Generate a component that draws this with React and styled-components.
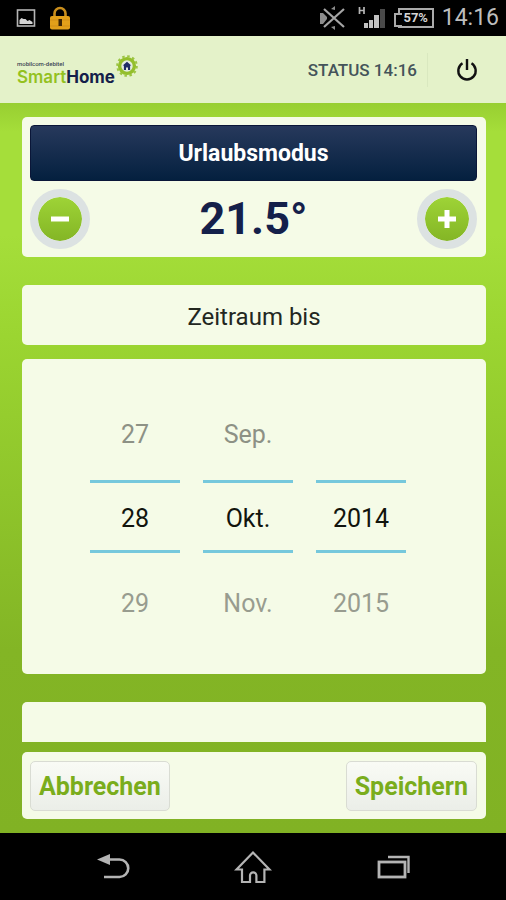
import React, { useState } from 'react';
import styled, { createGlobalStyle, css } from 'styled-components';

const GlobalStyle = createGlobalStyle`
  * {
    box-sizing: border-box;
  }

  body {
    margin: 0;
    background: #000;
    font-family: Roboto, 'Liberation Sans', sans-serif;
  }

  button,
  input {
    font-family: inherit;
    margin: 0;
  }
`;

const Screen = styled.div`
  display: flex;
  flex-direction: column;
  height: 100vh;
`;

const StatusBar = styled.div`
  display: flex;
  align-items: center;
  justify-content: space-between;
  flex: none;
  height: 36px;
  padding: 0 7px 0 16px;
  background: #000;
  color: #bdbdbd;
`;

const StatusGroup = styled.div`
  display: flex;
  align-items: center;
  gap: ${props => props.$gap}px;
`;

const Clock = styled.span`
  font-size: 23px;
  line-height: 36px;
`;

const Battery = styled.div`
  position: relative;
  width: 36px;
  height: 20px;
  margin-left: 4px;
  border: 2px solid #aaa;
  color: #d5d5d5;
  font-size: 13px;
  font-weight: 700;
  line-height: 16px;
  text-align: center;

  &::before {
    content: '';
    position: absolute;
    top: 3px;
    left: -6px;
    width: 6px;
    height: 10px;
    border: 2px solid #aaa;
    border-right: 0;
    background: #000;
  }
`;

const Header = styled.header`
  display: flex;
  align-items: center;
  justify-content: space-between;
  flex: none;
  height: 67px;
  padding: 0 28px 0 17px;
  background: #e4f2c9;
`;

const Brand = styled.a`
  display: flex;
  align-items: flex-start;
  color: #14204a;
  text-decoration: none;
`;

const BrandText = styled.span`
  display: flex;
  flex-direction: column;
  padding-top: 6px;
`;

const BrandOwner = styled.span`
  color: #3c4654;
  font-size: 6px;
  font-weight: 500;
  line-height: 8px;
`;

const BrandName = styled.span`
  font-family: Inter, sans-serif;
  font-size: 17px;
  font-weight: 700;
  line-height: 18px;

  em {
    color: #94c11f;
    font-style: normal;
    font-weight: 600;
  }
`;

const HeaderActions = styled.div`
  display: flex;
  align-items: center;
`;

const StatusText = styled.span`
  padding-right: 10px;
  border-right: 1px solid #d9e8bf;
  color: #44545a;
  font-size: 17px;
  font-weight: 500;
  line-height: 34px;
`;

const IconButton = styled.button`
  display: flex;
  padding: 0;
  border: 0;
  background: none;
  cursor: pointer;
`;

const PowerButton = styled(IconButton)`
  margin-left: 28px;
`;

const Main = styled.main`
  display: flex;
  flex: 1;
  flex-direction: column;
  min-height: 0;
  padding: 0 20px 14px 22px;
  background: linear-gradient(#98cf31 0, #a5de3a 4%, #a5de3a 18%, #9bd531 32%, #83b525 75%, #81b224 100%);
`;

const Content = styled.div`
  display: flex;
  flex: 1;
  flex-direction: column;
  gap: 28px;
  min-height: 0;
  margin-bottom: 10px;
  padding-top: 14px;
  overflow-y: auto;
  scrollbar-width: none;
`;

const Period = styled.section`
  display: flex;
  flex-direction: column;
  gap: 14px;
`;

const Card = styled.div`
  flex: none;
  border-radius: 5px;
  background: #f5fbe7;
`;

const ModeCard = styled(Card)`
  padding: 8px 9px 8px 8px;
`;

const ModeTitle = styled.h1`
  margin: 0;
  padding-top: 2px;
  border: 1px solid #0a1638;
  border-radius: 4px;
  background: linear-gradient(#27395c, #04203f);
  color: #fff;
  font-size: 23px;
  font-weight: 700;
  line-height: 52px;
  text-align: center;
`;

const Temperature = styled.div`
  display: flex;
  align-items: center;
  justify-content: space-between;
  padding-top: 8px;
`;

const Degrees = styled.output`
  color: #14204a;
  font-size: 45px;
  font-weight: 700;
  line-height: 60px;
`;

const RoundButton = styled(IconButton)`
  align-items: center;
  justify-content: center;
  width: 60px;
  height: 60px;
  border: 8px solid #dce2e2;
  border-radius: 50%;
  background: linear-gradient(#a3d93a, #7fb022) border-box;
  background-clip: padding-box;
`;

const PeriodTitle = styled(Card).attrs({ as: 'h2' })`
  margin: 0;
  padding-top: 4px;
  color: #23271f;
  font-size: 24px;
  font-weight: 400;
  line-height: 56px;
  text-align: center;
`;

const DateCard = styled(Card)`
  display: flex;
  justify-content: center;
  gap: 23px;
  padding: 25px 12px 25px 0;
`;

const Wheel = styled.div`
  display: flex;
  flex-direction: column;
  width: 90px;
`;

const wheelText = css`
  width: 100%;
  padding: 4px 0 0;
  background: none;
  font-size: 25px;
  text-align: center;
`;

const WheelStep = styled.button`
  ${wheelText}
  height: 96px;
  border: 0;
  color: ${props => (props.$above ? '#8d9185' : '#989c8f')};
  cursor: pointer;
`;

const WheelValue = styled.input`
  ${wheelText}
  height: 73px;
  border: solid #76c8dc;
  border-width: 3px 0;
  border-radius: 0;
  color: #11140d;
  outline: none;
`;

const EmptyCard = styled(Card)`
  height: 60px;
`;

const ActionCard = styled(Card)`
  display: flex;
  justify-content: space-between;
  padding: 9px 9px 8px 8px;
`;

const ActionButton = styled.button`
  height: 50px;
  padding: 0 8px;
  border: 1px solid #d9dcd3;
  border-radius: 5px;
  background: linear-gradient(#f9fbf5, #ebeee8);
  color: #7aad1c;
  font-size: 25px;
  font-weight: 700;
  cursor: pointer;
`;

const NavBar = styled.nav`
  display: flex;
  align-items: center;
  justify-content: center;
  gap: 104px;
  flex: none;
  height: 67px;
  background: #000;
`;

const PictureIcon = () => (
  <svg width="20" height="19" viewBox="0 0 20 19">
    <rect x="1.5" y="1" width="17" height="16" fill="none" stroke="#b5b5b5" strokeWidth="1.6" />
    <path d="M3.500 15v-4l2-2 2 1 2 0 2 2 2-1 3 2v2z" fill="#d5d5d5" />
  </svg>
);

const LockIcon = () => (
  <svg width="22" height="26" viewBox="0 0 22 26">
    <path d="M5.500 11V8.500a5.500 5.500 0 0 1 11 0V11" fill="none" stroke="#c98e1c" strokeWidth="2.600" />
    <rect x="1" y="11" width="20" height="13.500" rx="2" fill="#e2a01a" />
    <path d="M1 15h20M1 21h20" stroke="#d18e17" strokeWidth="1" />
    <rect x="9.500" y="14" width="3.500" height="7" fill="#3a2406" />
  </svg>
);

const MuteIcon = () => (
  <svg width="31" height="26" viewBox="0 0 31 26">
    <path d="M1 8h3l4 4v2l-4 5H1zM12 4l4-3v4zM12 22l4 3v-4z" fill="#8c8c8c" />
    <path d="M5 4l20 18M25 4L5 22" stroke="#a5a5a5" strokeWidth="2.200" />
  </svg>
);

const SignalIcon = () => (
  <svg width="28" height="26" viewBox="0 0 28 26">
    <path d="M1.500 2v7M6 2v7M1.500 5.500H6" stroke="#b5b5b5" strokeWidth="1.700" fill="none" />
    <path d="M6 18h4v5H6zM11 15h4v8h-4zM16 10h5v13h-5z" fill="#c2c2c2" />
    <path d="M22 4h5v19h-5z" fill="#4a4a4a" />
  </svg>
);

const GearIcon = () => (
  <svg width="24" height="24" viewBox="0 0 24 24">
    <circle cx="12" cy="12" r="9.800" fill="none" stroke="#9cc544" strokeWidth="2" strokeDasharray="2.560 2.560" />
    <circle cx="12" cy="12" r="7.400" fill="#e3ecdf" stroke="#94bf2c" strokeWidth="3.400" />
    <path d="M12 7.800l-4.300 3.700h1.200V16h2.100v-2.500h2V16h2.100v-4.500h1.200z" fill="#1f2c66" />
  </svg>
);

const PowerIcon = () => (
  <svg width="22" height="24" viewBox="0 0 22 24" fill="none" stroke="#111" strokeWidth="2.400">
    <path d="M6.500 5.300a8.700 8.700 0 1 0 9 0M11 1v11" />
  </svg>
);

const BackIcon = () => (
  <svg width="34" height="26" viewBox="0 0 34 26">
    <path d="M13 5.500h10.500a8.700 8.700 0 0 1 0 17.500H8" fill="none" stroke="#b4b4b4" strokeWidth="2.600" />
    <path d="M1 5.500L14 0v11z" fill="#b4b4b4" />
  </svg>
);

const HomeIcon = () => (
  <svg width="38" height="34" viewBox="0 0 38 34">
    <path
      d="M19 2.500L2.500 19.500h5.500V32h8v-6.500a3.200 3.200 0 0 1 6.400 0V32h8V19.500h5.100z"
      fill="none"
      stroke="#b4b4b4"
      strokeWidth="2.200"
    />
  </svg>
);

const RecentIcon = () => (
  <svg width="34" height="24" viewBox="0 0 34 24" fill="none" stroke="#b4b4b4">
    <rect x="3" y="7" width="26" height="15" strokeWidth="2.800" />
    <path d="M12 2h20.500v16" strokeWidth="2.400" />
  </svg>
);

const months = ['Jan.', 'Feb.', 'März', 'Apr.', 'Mai', 'Juni', 'Juli', 'Aug.', 'Sep.', 'Okt.', 'Nov.', 'Dez.'];

const DateWheel = ({ label, value, previous, next, onStep }) => (
  <Wheel>
    <WheelStep type="button" $above disabled={!previous} onClick={() => onStep(-1)}>
      {previous}
    </WheelStep>
    <WheelValue aria-label={label} value={value} readOnly />
    <WheelStep type="button" onClick={() => onStep(1)}>
      {next}
    </WheelStep>
  </Wheel>
);

const App = () => {
  const [temperature, setTemperature] = useState(21.5);
  const [day, setDay] = useState(28);
  const [month, setMonth] = useState(9);
  const [year, setYear] = useState(2014);

  const wrapDay = value => ((value + 30) % 31) + 1;
  const wrapMonth = value => (value + 12) % 12;

  return (
    <Screen>
      <GlobalStyle />
      <StatusBar>
        <StatusGroup $gap={13}>
          <PictureIcon />
          <LockIcon />
        </StatusGroup>
        <StatusGroup $gap={8}>
          <MuteIcon />
          <SignalIcon />
          <Battery>57%</Battery>
          <Clock>14:16</Clock>
        </StatusGroup>
      </StatusBar>

      <Header>
        <Brand href="#">
          <BrandText>
            <BrandOwner>mobilcom-debitel</BrandOwner>
            <BrandName>
              <em>Smart</em>Home
            </BrandName>
          </BrandText>
          <GearIcon />
        </Brand>
        <HeaderActions>
          <StatusText>STATUS 14:16</StatusText>
          <PowerButton type="button" aria-label="Abmelden">
            <PowerIcon />
          </PowerButton>
        </HeaderActions>
      </Header>

      <Main>
        <Content>
          <ModeCard>
            <ModeTitle>Urlaubsmodus</ModeTitle>
            <Temperature>
              <RoundButton type="button" aria-label="Kälter" onClick={() => setTemperature(temperature - 0.5)}>
                <svg width="20" height="20" viewBox="0 0 20 20">
                  <path d="M1 10h18" stroke="#fff" strokeWidth="5" />
                </svg>
              </RoundButton>
              <Degrees>{temperature.toFixed(1)}°</Degrees>
              <RoundButton type="button" aria-label="Wärmer" onClick={() => setTemperature(temperature + 0.5)}>
                <svg width="20" height="20" viewBox="0 0 20 20">
                  <path d="M1 10h18M10 1v18" stroke="#fff" strokeWidth="5" />
                </svg>
              </RoundButton>
            </Temperature>
          </ModeCard>

          <Period>
            <PeriodTitle>Zeitraum bis</PeriodTitle>
            <DateCard>
              <DateWheel
                label="Tag"
                value={day}
                previous={wrapDay(day - 1)}
                next={wrapDay(day + 1)}
                onStep={step => setDay(wrapDay(day + step))}
              />
              <DateWheel
                label="Monat"
                value={months[month]}
                previous={months[wrapMonth(month - 1)]}
                next={months[wrapMonth(month + 1)]}
                onStep={step => setMonth(wrapMonth(month + step))}
              />
              <DateWheel
                label="Jahr"
                value={year}
                previous={year > 2014 ? year - 1 : ''}
                next={year + 1}
                onStep={step => setYear(year + step)}
              />
            </DateCard>
          </Period>

          <EmptyCard />
        </Content>

        <ActionCard>
          <ActionButton type="button">Abbrechen</ActionButton>
          <ActionButton type="button">Speichern</ActionButton>
        </ActionCard>
      </Main>

      <NavBar>
        <IconButton type="button" aria-label="Zurück">
          <BackIcon />
        </IconButton>
        <IconButton type="button" aria-label="Startseite">
          <HomeIcon />
        </IconButton>
        <IconButton type="button" aria-label="Letzte Apps">
          <RecentIcon />
        </IconButton>
      </NavBar>
    </Screen>
  );
};

export default App;
